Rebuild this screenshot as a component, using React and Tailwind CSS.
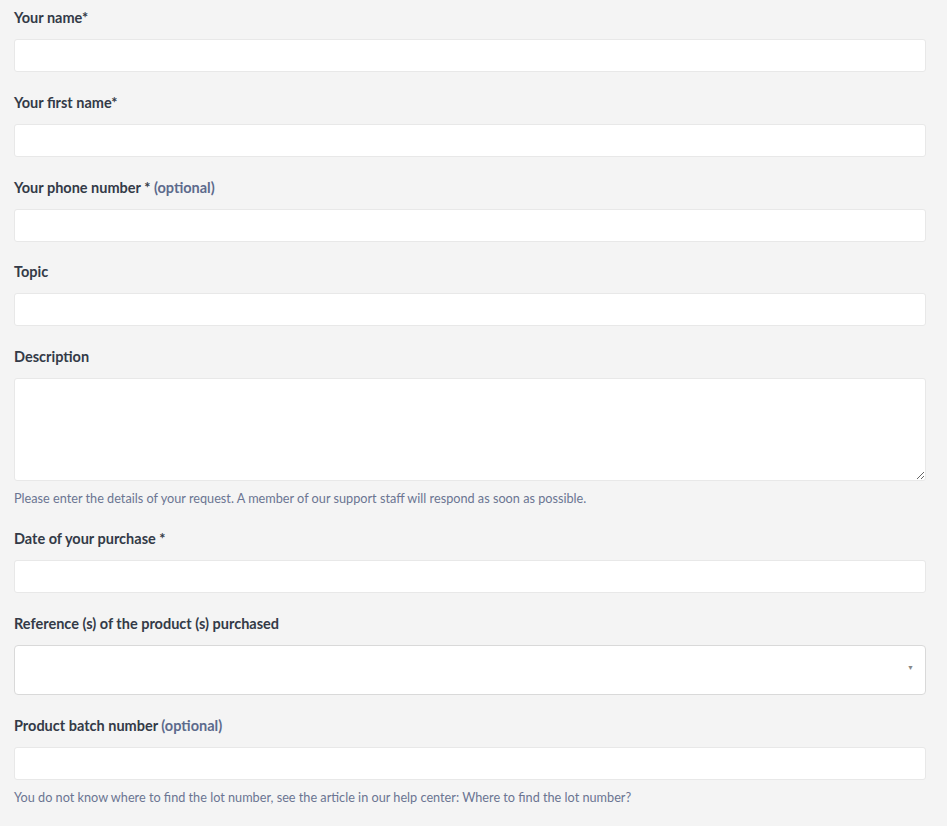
import React from "react";

const Label = ({ children }) => (
  <label className="block text-[14.5px] leading-[20px] font-bold text-[#333a47] mb-[11px]">{children}</label>
);
const Input = () => (
  <input type="text" className="block w-full h-[33px] bg-white border border-[#e8e8e8] rounded-[3px] px-2 outline-none" />
);
const Hint = ({ children }) => (
  <p className="text-[12.7px] leading-[18px] text-[#6b7592] mt-[8px]">{children}</p>
);
const Opt = () => <span className="text-[#5c6a8c]"> (optional)</span>;

export default function App() {
  return (
    <div className="min-h-[826px] bg-[#f4f4f4] px-[14px] pt-[8px] pr-[21px]" style={{ fontFamily: "Lato, 'Open Sans', sans-serif" }}>
      <div className="mb-[21px]">
        <Label>Your name*</Label>
        <Input />
      </div>
      <div className="mb-[21px]">
        <Label>Your first name*</Label>
        <Input />
      </div>
      <div className="mb-[20px]">
        <Label>Your phone number *<Opt /></Label>
        <Input />
      </div>
      <div className="mb-[21px]">
        <Label>Topic</Label>
        <Input />
      </div>
      <div className="mb-[22px]">
        <Label>Description</Label>
        <textarea className="block w-full h-[103px] bg-white border border-[#e8e8e8] rounded-[3px] px-2 outline-none" />
        <Hint>Please enter the details of your request. A member of our support staff will respond as soon as possible.</Hint>
      </div>
      <div className="mb-[21px]">
        <Label>Date of your purchase *</Label>
        <Input />
      </div>
      <div className="mb-[21px]">
        <Label>Reference (s) of the product (s) purchased</Label>
        <div className="relative h-[50px] bg-white border border-[#d9d9d9] rounded-[4px]">
          <span className="absolute right-[11px] top-[16px] text-[7px] text-[#888]">▼</span>
        </div>
      </div>
      <div>
        <Label>Product batch number<Opt /></Label>
        <Input />
        <Hint>You do not know where to find the lot number, see the article in our help center: Where to find the lot number?</Hint>
      </div>
    </div>
  );
}
